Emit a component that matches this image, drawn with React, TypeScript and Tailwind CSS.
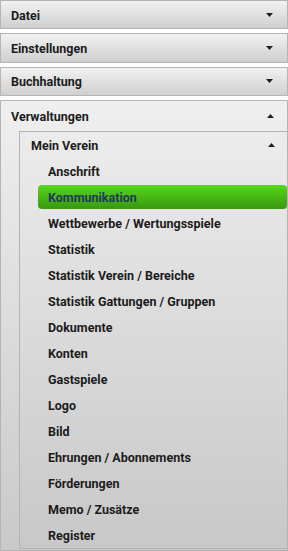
import React from "react";

const font = { fontFamily: 'Roboto, "Noto Sans", sans-serif' };

function Arrow({ up }: { up?: boolean }) {
  return (
    <svg width="7" height="4" viewBox="0 0 7 4" className="block">
      {up ? <polygon points="0,4 7,4 3.5,0" fill="#1e1e1e" /> : <polygon points="0,0 7,0 3.5,4" fill="#1e1e1e" />}
    </svg>
  );
}

const txt = "text-[12.5px] font-bold text-[#1c1c1c] leading-[16px] pt-[2px]";

function Header({ label }: { label: string }) {
  return (
    <div className="h-[30px] flex items-center justify-between pl-[10px] pr-[14px] border border-[#b4b4b4] bg-gradient-to-b from-[#f2f2f2] to-[#cfcfcf]">
      <span className={txt}>{label}</span>
      <Arrow />
    </div>
  );
}

const items = [
  "Anschrift",
  "Kommunikation",
  "Wettbewerbe / Wertungsspiele",
  "Statistik",
  "Statistik Verein / Bereiche",
  "Statistik Gattungen / Gruppen",
  "Dokumente",
  "Konten",
  "Gastspiele",
  "Logo",
  "Bild",
  "Ehrungen / Abonnements",
  "Förderungen",
  "Memo / Zusätze",
  "Register",
];

export default function App() {
  return (
    <div className="w-[288px] h-[551px] bg-white overflow-hidden flex flex-col gap-[4px]" style={font}>
      <Header label="Datei" />
      <Header label="Einstellungen" />
      <Header label="Buchhaltung" />
      <div className="flex-1 flex flex-col border border-[#b4b4b4] bg-gradient-to-b from-[#efefef] to-[#c9c9c9] pl-[18px] pb-[1px]">
        <div className="h-[30px] flex items-center justify-between -ml-[8px] pr-[13px]">
          <span className={txt}>Verwaltungen</span>
          <Arrow up />
        </div>
        <div className="flex-1 flex flex-col border border-[#b4b4b4] bg-gradient-to-b from-[#ececec] to-[#c8c8c8] -mr-[1px]">
          <div className="h-[26px] flex items-center justify-between pl-[11px] pr-[12px]">
            <span className={txt}>Mein Verein</span>
            <Arrow up />
          </div>
          <div className="flex flex-col pl-[18px]">
            {items.map((it) =>
              it === "Kommunikation" ? (
                <div key={it} className="h-[26px] flex items-center py-[1px]">
                  <div className="h-[24px] w-full flex items-center pl-[10px] rounded-[4px] bg-gradient-to-b from-[#58d81b] to-[#3a9810]">
                    <span className="text-[12.5px] font-bold text-[#1d3a5c] leading-[16px] pt-[2px]">{it}</span>
                  </div>
                </div>
              ) : (
                <div key={it} className="h-[26px] flex items-center pl-[10px]">
                  <span className={txt}>{it}</span>
                </div>
              )
            )}
          </div>
        </div>
      </div>
    </div>
  );
}
